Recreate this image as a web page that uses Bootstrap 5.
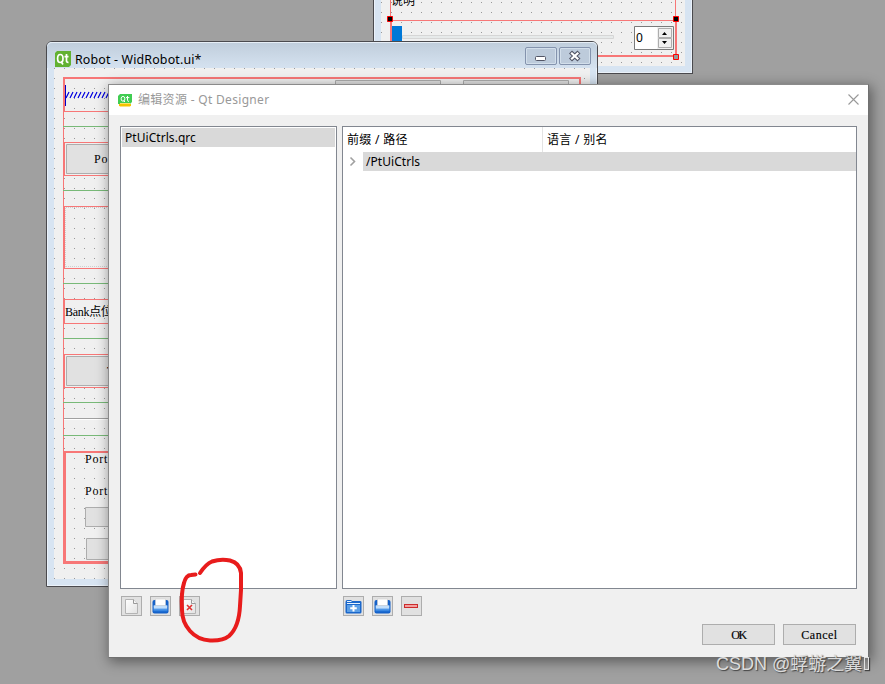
<!DOCTYPE html>
<html lang="zh-CN">
<head>
<meta charset="utf-8">
<title>Qt Designer</title>
<meta name="viewport" content="width=device-width, initial-scale=1">
<link href="https://cdn.jsdelivr.net/npm/bootstrap@5.3.0/dist/css/bootstrap.min.css" rel="stylesheet">
<style>
html,body{height:100%}
body{background:#a0a0a0;font-family:"Noto Sans","Noto Sans CJK SC",sans-serif;font-size:12px;line-height:18px;color:#000}
.desk{width:885px;height:684px}
.win{position:absolute;border:1px solid #4a4a4e;background:#d7e4f2;box-shadow:inset 0 0 0 1px #ebf2fa}
.win-form{left:373px;top:-30px;width:320px;height:104px;padding:29px 7px 7px}
.win-robot{left:46px;top:41px;width:552px;height:546px;border-radius:6px 6px 0 0;padding:0 7px 7px}
.win-title{height:26px;padding:8px 6px 0 8px;margin:0 -7px;background:linear-gradient(#bfcddb,#d5e2f0);border-radius:5px 5px 0 0;box-shadow:inset 0 1px #e6eef6}
.win-title .cap{letter-spacing:.16px;font-size:12.4px;line-height:18px;margin:2px 0 0 4px}
.wbtn{width:32px;height:18px;border:1px solid #8493ad;border-radius:2px;box-shadow:inset 0 0 0 1px #d3dfeb;background:#bdcbdb;margin-top:-6px}
.wbtn+.wbtn{margin-left:2px}
.canvas{position:relative;overflow:hidden;background-color:#f0f0f0}
.grid-dots{position:absolute;left:0;top:0;width:100%;height:100%}
.canvas>.it{position:absolute}
.song{font-family:"Liberation Serif","Noto Sans CJK SC",serif;font-size:12px;line-height:14px;letter-spacing:.8px;white-space:nowrap}
.dlg{position:absolute;left:108px;top:84px;width:761px;height:574px;border:1px solid #8b8b8b;border-right-color:#707070;border-bottom-color:#707070;background:#f0f0f0;box-shadow:2px 3px 12px 1px rgba(0,0,0,.42)}
.dlg-title{height:30px;background:#fff;color:#999;padding:0 9px}
.dlg-title .cap{font-size:12px;letter-spacing:.31px;margin-left:6px}
.dlg-body{height:542px;padding:11px 11px 0}
.pane{height:463px;border:1px solid #828790;background:#fff}
.pane-l{width:217px;padding:1px}
.pane-r{width:515px}
.sel{background:#d9d9d9;height:19px;line-height:19px}
.pane-l .sel{padding-left:3px}
.hdr{height:25px;line-height:26px;letter-spacing:.3px}
.hdr>div:first-child{width:200px;padding-left:4px;border-right:1px solid #e3e3e3}
.hdr>div:last-child{padding-left:4px}
.sel{letter-spacing:.05px}
.twig{width:20px;height:19px}
.tools{height:20px;margin-top:7px}
.tools .grp1{width:223px;padding-left:1px}
.tool{width:21px;height:20px;border:1px solid #adadad;background:#e1e1e1}
.tool svg{display:block;width:19px;height:18px}
.foot{gap:8px;margin-top:8px;padding-right:1px}
.pb{width:73px;height:21px;border:1px solid #adadad;background:#e1e1e1;font-size:12px;line-height:20px;border-radius:0;padding:0;letter-spacing:.5px;-webkit-text-stroke:.15px #000}
.pb.tight{letter-spacing:-1.5px}
.scribble{position:absolute;left:0;top:0;pointer-events:none}
.wmark{position:absolute;left:716px;top:653px;font-family:"Liberation Sans","Noto Sans CJK SC",sans-serif;font-size:18px;line-height:22px;color:#dcdcdc;text-shadow:1px 1px 1px #444;white-space:nowrap}
.box{display:inline-block;width:5px;height:13px;border:1px solid #e2e2e2;box-shadow:1px 1px 1px #444;margin-left:2px}
</style>
<script src="https://cdn.jsdelivr.net/npm/bootstrap@5.3.0/dist/js/bootstrap.bundle.min.js"></script>
</head>
<body class="overflow-hidden">
<svg width="0" height="0" class="position-absolute">
<defs>
<pattern id="dp" width="10" height="10" patternUnits="userSpaceOnUse"><rect width="1" height="1" fill="#999"/></pattern>
<linearGradient id="paper" x1="0" y1="0" x2="1" y2="1"><stop stop-color="#fff"/><stop offset="1" stop-color="#e2e2e2"/></linearGradient>
<linearGradient id="blue" x1="0" y1="0" x2="0" y2="1"><stop stop-color="#9fccf7"/><stop offset=".45" stop-color="#6aaaf0"/><stop offset="1" stop-color="#2478dc"/></linearGradient>
<symbol id="i-file" viewBox="0 0 19 18"><path d="M3.500 2.500h8l4 4v10h-12z" fill="url(#paper)" stroke="#b4b4b4"/><path d="M11.500 2.500v4h4" fill="#f4f4f4" stroke="#999"/></symbol>
<symbol id="i-open" viewBox="0 0 19 18"><path d="M1.500 5q0-2 2-2h12q2 0 2 2v9.500q0 2-2 2h-12q-2 0-2-2z" fill="#1662c9"/><path d="M2.500 8.500h14v6h-14z" fill="url(#blue)"/><path d="M3 8.500h13v3H3z" fill="#c3dffb"/><path d="M4.500 2h10v6.500h-10z" fill="#fff" stroke="#cfcfcf" stroke-width=".6"/></symbol>
<symbol id="i-add" viewBox="0 0 19 18"><path d="M1.500 5q0-2 2-2h3q1 0 1.500 1h8q1.500 0 1.500 1v10q0 1.500-1.500 1.500h-13q-1.500 0-1.500-1.500z" fill="#1a67cb"/><path d="M3 4.500h4.500M3 6.500h13" stroke="#e6f2fd"/><path d="M3 8h13v7H3z" fill="#5c9fe6"/><path d="M9.500 8v6.500M6.200 11.300h6.600" stroke="#fff" stroke-width="2"/></symbol>
</defs>
</svg>
<main class="desk position-relative overflow-hidden">

<section class="win win-form">
 <div class="canvas h-100">
 <svg class="grid-dots" viewBox="381 0 304 66" preserveAspectRatio="xMinYMin">
  <g transform="translate(381 2)"><rect width="304" height="64" fill="url(#dp)"/></g>
  <g fill="#f77777"><path d="M390 0h1v20h-1zM675 0h1v20h-1zM390 20h286v1h-286zM390 20h2v37h-2zM675 20h2v37h-2zM390 55h287v2h-287z"/></g>
  <path d="M402.500 35.500h211v3h-211z" fill="#e7eaea" stroke="#d6d6d6"/>
  <path d="M392 26h10v20h-10z" fill="#0078d7"/>
  <path d="M634.500 26.500h39v23h-39z" fill="#fff" stroke="#7a7a7a"/>
  <path d="M657 27h16v22h-16z" fill="#f0f0f0"/><path d="M658.500 28.500h13v9h-13zM658.500 38.500h13v9h-13z" fill="#f0f0f0" stroke="#adadad"/>
  <path d="M662 35h5l-2.500-3zM662 41h5l-2.500 3z"/>
  <g fill="#000" stroke="#f00"><path d="M387.500 16.500h5v5h-5zM673.500 16.500h5v5h-5z"/><path d="M673.500 54.500h5v5h-5z" fill="#999"/></g>
 </svg>
 <div class="it" style="left:10px;top:-8px">说明</div>
 <div class="it" style="left:255px;top:29px">0</div>
 </div>
</section>

<section class="win win-robot">
 <header class="win-title d-flex align-items-center">
  <svg width="16" height="16" viewBox="0 0 16 16"><path d="M2 0h14v14l-2 2H0V2z" fill="#62b132"/><g fill="none" stroke="#fff" stroke-width="1.700"><ellipse cx="5.300" cy="7.500" rx="2.700" ry="4"/><path d="M6 10.500l2 3M11.500 3v7q0 1.500 2 1.300M9.500 5.700h4"/></g></svg>
  <span class="cap">Robot - WidRobot.ui*</span>
  <div class="wbtn ms-auto"><svg width="30" height="16" class="d-block"><rect x="9.500" y="8.500" width="10" height="4" rx="1" fill="#fff" stroke="#535666"/></svg></div>
  <div class="wbtn"><svg width="30" height="16" class="d-block"><path d="M10.500 4l8.500 8M19 4l-8.500 8" stroke="#535666" stroke-width="4.400"/><path d="M11.200 4.700l7.100 6.600M18.300 4.700l-7.100 6.600" stroke="#fff" stroke-width="2.200"/></svg></div>
 </header>
 <div class="canvas" style="height:511px">
 <svg class="grid-dots" viewBox="54 68 536 511" preserveAspectRatio="xMinYMin">
  <g transform="translate(54 68)"><rect width="536" height="511" fill="url(#dp)"/></g>
  <g fill="#f77777"><path d="M63 77h518v2h-518zM579 77h2v30h-2zM63 77h2v35h-2zM63 111h46v1h-46zM63 111h1v341h-1zM63 142h60v1h-60zM63 142h2v34h-2zM63 175h60v1h-60zM63 206h60v1h-60zM63 206h2v63h-2zM63 268h60v1h-60zM63 299h60v1h-60zM63 299h2v25h-2zM63 323h60v1h-60zM63 354h60v1h-60zM63 354h2v34h-2zM63 387h60v1h-60zM63 451h60v2h-60zM63 451h3v113h-3zM63 561h60v3h-60z"/></g>
  <path d="M63 126h60v1h-60zM63 190h60v1h-60zM63 283h60v1h-60zM63 338h60v1h-60zM63 402h60v1h-60zM63 435h60v1h-60z" fill="#78b978"/>
  <path d="M64 418h60v1h-60z" fill="#a0a0a0"/><path d="M64 419h60v1h-60z" fill="#fff"/>
  <path d="M65.500 267v-59.500h60M66 266.500h60" fill="none" stroke="#d0d0d0" stroke-dasharray="1 1"/>
  <g fill="#e1e1e1" stroke="#adadad"><path d="M66.500 144.500h60v29h-60zM66.500 356.500h60v29h-60zM85.500 507.500h60v19h-60zM86.500 538.500h60v21h-60zM335.500 80.500h105v20h-105zM463.500 80.500h105v20h-105z"/></g>
  <path d="M65 85h1v21h-1z" fill="#0000c8"/>
  <path d="M66 98l3-6M70 98l3-6M74 98l3-6M78 98l3-6M82 98l3-6M86 98l3-6M90 98l3-6M94 98l3-6M98 98l3-6M102 98l3-6M106 98l3-6" stroke="#0000e0" stroke-width="1.200" fill="none"/>
 </svg>
 <div class="it song" style="left:40px;top:84px">Port</div>
 <div class="it song" style="left:11px;top:237px;letter-spacing:-.3px">Bank点位</div>
 <div class="it song" style="left:53px;top:296px">T</div>
 <div class="it song" style="left:31px;top:384px">Port</div>
 <div class="it song" style="left:31px;top:416px">Port</div>
 </div>
</section>

<section class="dlg">
 <header class="dlg-title d-flex align-items-center">
  <svg width="14" height="13" viewBox="0 0 14 13"><path d="M2 0h12v8l-2 2H0V2z" fill="#41cd52"/><path d="M1 10h12v1.500l-1 1H2l-1-1z" fill="#f4c400"/><path d="M2 9.500h10" stroke="#fbe26a"/><g fill="none" stroke="#fff"><ellipse cx="5" cy="4.800" rx="1.900" ry="2.400"/><path d="M5.500 6.500l1.500 1.500M9.500 2v4.500q0 1 1.500 .8M8 3.600h3.300"/></g></svg>
  <span class="cap">编辑资源 - Qt Designer</span>
  <svg class="ms-auto" width="11" height="11" style="margin-top:-2px"><path d="M.5 .5l10 10M10.500 .5l-10 10" stroke="#999" stroke-width="1.100"/></svg>
 </header>
 <div class="dlg-body">
  <div class="d-flex justify-content-between">
   <div class="pane pane-l"><div class="sel">PtUiCtrls.qrc</div></div>
   <div class="pane pane-r">
    <div class="hdr d-flex"><div>前缀 / 路径</div><div>语言 / 别名</div></div>
    <div class="d-flex"><div class="twig"><svg class="d-block" width="20" height="19"><path d="M7.500 5.500l4 4-4 4" fill="none" stroke="#a0a0a0" stroke-width="1.600"/></svg></div><div class="sel flex-fill" style="padding-left:3px">/PtUiCtrls</div></div>
   </div>
  </div>
  <div class="tools d-flex">
   <div class="grp1 d-flex gap-2">
    <div class="tool"><svg><use href="#i-file"/></svg></div>
    <div class="tool"><svg><use href="#i-open"/></svg></div>
    <div class="tool"><svg viewBox="0 0 19 18"><use href="#i-file"/><path d="M7 8l5 5M12 8l-5 5" stroke="#e03030" stroke-width="1.600"/></svg></div>
   </div>
   <div class="d-flex gap-2">
    <div class="tool"><svg><use href="#i-add"/></svg></div>
    <div class="tool"><svg><use href="#i-open"/></svg></div>
    <div class="tool"><svg viewBox="0 0 19 18"><rect x="2.500" y="7.500" width="13" height="3" fill="#f3a0a0" stroke="#cc2c2c"/></svg></div>
   </div>
  </div>
  <div class="foot d-flex justify-content-end">
   <button class="pb song tight">OK</button>
   <button class="pb song">Cancel</button>
  </div>
 </div>
</section>

<svg class="scribble" width="885" height="684"><path d="M200 573Q206 564 212 561.500Q221 558.500 230 560.500Q240 563 241 573Q241.500 590 240 606Q239 627 229 636Q223 641 210 640.500Q198 640 190 631Q182 622 182 610Q181 592 184 583Q186 575 191 575L195.500 574.500" fill="none" stroke="#e81c1c" stroke-width="4" stroke-linecap="round" stroke-linejoin="round"/></svg>
<div class="wmark">CSDN @蜉蝣之翼<span class="box"></span></div>
</main>
</body>
</html>
